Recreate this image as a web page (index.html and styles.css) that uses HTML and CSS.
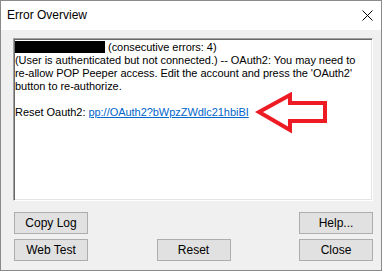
FILE: index.html
```html
<!DOCTYPE html>
<html lang="en">
<head>
    <meta charset="UTF-8">
    <title>Error Overview</title>
    <link rel="stylesheet" href="styles.css">
</head>
<body>
<div class="window">
    <div class="titlebar">
        <span class="title">Error Overview</span>
        <svg class="close" width="11" height="11" viewBox="0 0 11 11">
            <path d="M0.5 0.5L10.5 10.5M10.5 0.5L0.5 10.5" stroke="#000" stroke-width="1" fill="none"/>
        </svg>
    </div>
    <div class="body">
        <div class="log">
            <div class="line"><span class="redact"></span> (consecutive errors: 4)</div>
            <div class="line">(User is authenticated but not connected.) -- OAuth2: You may need to</div>
            <div class="line">re-allow POP Peeper access. Edit the account and press the 'OAuth2'</div>
            <div class="line">button to re-authorize.</div>
            <div class="line">&nbsp;</div>
            <div class="line">Reset Oauth2: <a href="#">pp://OAuth2?bWpzZWdlc21hbiBI</a></div>
            <svg class="arrow" width="74" height="44" viewBox="0 0 74 44">
                <polygon points="4,20 35,3 35,11 70,11 70,29 35,29 35,38" fill="none" stroke="#ed1c24" stroke-width="4" stroke-linejoin="miter"/>
            </svg>
        </div>
        <div class="row">
            <button>Copy Log</button>
            <button>Help...</button>
        </div>
        <div class="row second">
            <button>Web Test</button>
            <button>Reset</button>
            <button>Close</button>
        </div>
    </div>
</div>
</body>
</html>
```

FILE: styles.css
```css
*{
    margin: 0;
    padding: 0;
    box-sizing: border-box;
}
body{
    background-color: #ffffff;
    width: 386px;
    height: 273px;
    overflow: hidden;
}
.window{
    width: 382px;
    height: 271px;
    border: 1px solid #8a8a8a;
    background-color: #f0f0f0;
    display: flex;
    flex-direction: column;
}
.titlebar{
    height: 29px;
    background-color: #ffffff;
    display: flex;
    align-items: center;
    justify-content: space-between;
    padding: 0 8px 0 6px;
}
.title{
    font-family: "Liberation Sans", Arial, sans-serif;
    font-size: 12px;
    color: #000000;
    margin-top: -1px;
}
.close{
    display: block;
    margin-top: -1px;
}
.body{
    padding: 8px 8px 0 12px;
}
.log{
    position: relative;
    height: 163px;
    background-color: #ffffff;
    border-top: 1px solid #a0a0a0;
    border-left: 1px solid #a0a0a0;
    border-right: 1px solid #ffffff;
    border-bottom: 1px solid #ffffff;
    box-shadow: inset 1px 1px 0 #696969, inset -1px -1px 0 #e3e3e3;
    padding: 2px 0 0 1px;
    font-family: "Liberation Sans", Arial, sans-serif;
    font-size: 11px;
    line-height: 13px;
    letter-spacing: -0.04px;
    color: #000000;
}
.line{
    white-space: nowrap;
}
.redact{
    display: inline-block;
    width: 90px;
    height: 12px;
    background-color: #000000;
    vertical-align: -2px;
}
.log a{
    color: #0066cc;
    text-decoration: underline;
}
.arrow{
    position: absolute;
    left: 241px;
    top: 53px;
}
.row{
    display: flex;
    justify-content: space-between;
    padding-left: 1px;
    margin-top: 11px;
}
.row.second{
    margin-top: 5px;
}
.row button{
    width: 74px;
    height: 22px;
    background-color: #e1e1e1;
    border: 1px solid #adadad;
    font-family: "Liberation Sans", Arial, sans-serif;
    font-size: 12px;
    color: #000000;
}
```
